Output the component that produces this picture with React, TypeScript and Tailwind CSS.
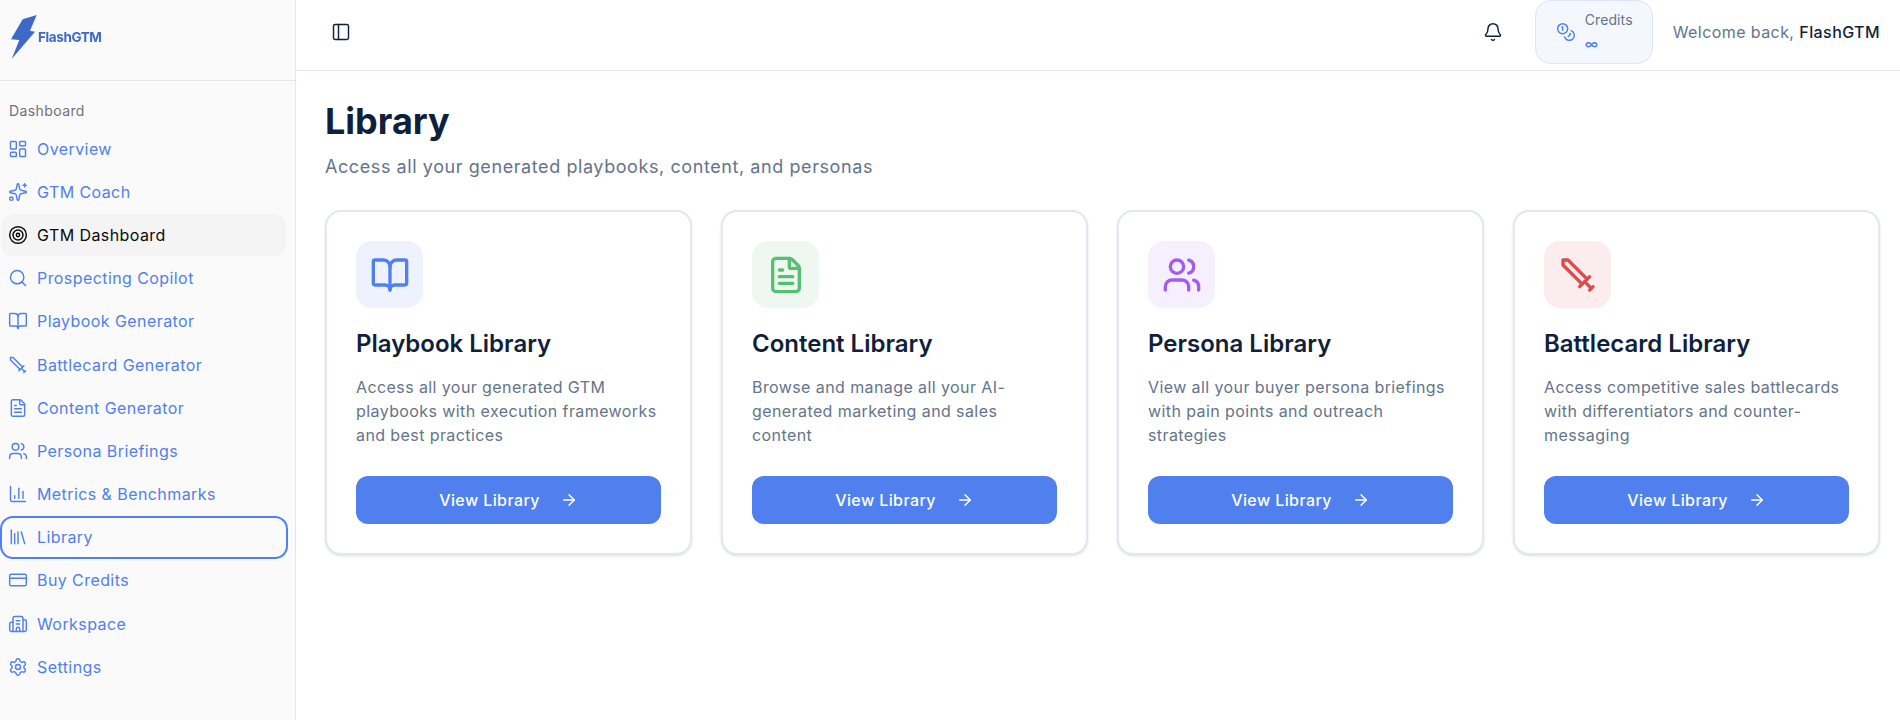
import {
  ArrowRight,
  Bell,
  BookOpen,
  Building2,
  ChartColumn,
  Coins,
  CreditCard,
  FileText,
  LayoutDashboard,
  Library,
  PanelLeft,
  Search,
  Settings,
  Sparkles,
  Sword,
  Target,
  Users,
} from 'lucide-react';

const navItems = [
  { label: 'Overview', icon: LayoutDashboard },
  { label: 'GTM Coach', icon: Sparkles },
  { label: 'GTM Dashboard', icon: Target, active: true },
  { label: 'Prospecting Copilot', icon: Search },
  { label: 'Playbook Generator', icon: BookOpen },
  { label: 'Battlecard Generator', icon: Sword, flip: true },
  { label: 'Content Generator', icon: FileText },
  { label: 'Persona Briefings', icon: Users },
  { label: 'Metrics & Benchmarks', icon: ChartColumn },
  { label: 'Library', icon: Library, focused: true },
  { label: 'Buy Credits', icon: CreditCard },
  { label: 'Workspace', icon: Building2 },
  { label: 'Settings', icon: Settings },
];

const cards = [
  {
    title: 'Playbook Library',
    text: 'Access all your generated GTM playbooks with execution frameworks and best practices',
    icon: BookOpen,
    tile: 'bg-[#eef2fd]',
    color: 'text-[#5080ee]',
  },
  {
    title: 'Content Library',
    text: 'Browse and manage all your AI-generated marketing and sales content',
    icon: FileText,
    tile: 'bg-[#eef8f0]',
    color: 'text-[#55c070]',
  },
  {
    title: 'Persona Library',
    text: 'View all your buyer persona briefings with pain points and outreach strategies',
    icon: Users,
    tile: 'bg-[#f5effe]',
    color: 'text-[#a35cf0]',
  },
  {
    title: 'Battlecard Library',
    text: 'Access competitive sales battlecards with differentiators and counter-messaging',
    icon: Sword,
    tile: 'bg-[#fbeded]',
    color: 'text-[#dc4c4c] -scale-x-100',
  },
];

function Sidebar() {
  return (
    <aside className="w-[296px] shrink-0 h-screen bg-[#fafafa] border-r border-[#e5e5e5]">
      {/* Logo */}
      <div className="h-[81px] border-b border-[#e2e8f0] pl-[10px] pt-[14px]">
        <div className="flex items-start">
          <svg width="28" height="46" viewBox="0 0 28 46" className="shrink-0">
            <path d="M12.7 5.3 L26.7 1 L20 16.7 L25 17.7 L1.7 45 L9.3 26 L1 25.3 Z" fill="#3d6ac8" />
          </svg>
          <span className="text-[13.5px] leading-5 mt-[13px] font-bold text-[#3d6ac8] tracking-[-0.4px] blur-[0.3px]">FlashGTM</span>
        </div>
      </div>

      {/* Nav */}
      <div className="text-[14px] leading-5 tracking-[0.4px] text-[#71717a] pl-[9px] mt-[20px] mb-[7px]">Dashboard</div>
      <nav className="flex flex-col gap-[2px] pl-[1px] pr-[9px]">
        {navItems.map((item) => (
          <div
            key={item.label}
            className={`flex items-center gap-[9px] h-[41.2px] pl-[7px] rounded-xl text-[16px] tracking-[0.42px] ${
              item.active ? 'bg-[#f4f4f5] text-[#0a0a0a]' : 'text-[#5080ee]'
            } ${item.focused ? 'outline-[2.5px] outline-offset-[-1px] outline-[#5080ee] -mr-px' : ''}`}
          >
            <item.icon size={20} strokeWidth={1.75} className={`shrink-0 ${item.flip ? '-scale-x-100' : ''}`} />
            <span>{item.label}</span>
          </div>
        ))}
      </nav>
    </aside>
  );
}

function Header() {
  return (
    <header className="h-[71px] border-b border-[#e2e8f0] flex items-start pl-[35px] pr-5">
      <div className="h-[64px] flex items-center">
        <PanelLeft size={20} strokeWidth={1.75} className="text-[#0f1f3d]" />
      </div>
      <div className="ml-auto flex items-center h-[64px]">
        <Bell size={20} strokeWidth={1.75} className="text-[#0f1f3d] mr-[32px]" />
        <div className="w-[118px] h-[64px] rounded-2xl border border-[#dbe4fb] bg-[#f5f7fe] flex items-center pl-[20px] gap-[9px]">
          <Coins size={20} strokeWidth={1.75} className="text-[#5080ee]" />
          <div className="flex flex-col -mt-px">
            <span className="text-[14px] leading-5 tracking-[0.1px] text-[#64748b]">Credits</span>
            <span className="text-[14px] leading-5 mt-[4px] font-medium text-[#5080ee]">∞</span>
          </div>
        </div>
        <div className="ml-5 text-[16px] tracking-[0.42px] text-[#64748b]">
          Welcome back, <span className="font-medium text-[#0f1f3d]">FlashGTM</span>
        </div>
      </div>
    </header>
  );
}

function LibraryCard({ title, text, icon: Icon, tile, color }: (typeof cards)[number]) {
  return (
    <div className="border-2 border-[#e2e8f0] rounded-2xl p-[29px] shadow-sm bg-white flex flex-col">
      <div className={`w-[67px] h-[67px] rounded-2xl flex items-center justify-center ${tile}`}>
        <Icon size={40} strokeWidth={2} className={color} />
      </div>
      <h3 className="mt-[20px] text-[24px] leading-8 font-semibold text-[#0f1f3d]">{title}</h3>
      <p className="mt-[15px] text-[16px] leading-6 tracking-[0.41px] text-[#64748b]">{text}</p>
      <button className="mt-[29px] w-full h-[48px] rounded-xl bg-[#5080ee] text-white text-[16px] tracking-[0.4px] font-medium flex items-center justify-center gap-5">
        View Library
        <ArrowRight size={18} strokeWidth={2} />
      </button>
    </div>
  );
}

export default function App() {
  return (
    <div className="flex h-screen overflow-hidden bg-white font-['Inter',sans-serif]">
      <Sidebar />
      <div className="flex-1 min-w-0">
        <Header />
        <main className="pt-[30px] pl-[29px] pr-5">
          <h1 className="text-[36px] leading-10 font-bold text-[#0f1f3d]">Library</h1>
          <p className="mt-3 text-[18px] leading-7 tracking-[0.58px] text-[#64748b]">
            Access all your generated playbooks, content, and personas
          </p>
          <div className="mt-[29px] grid grid-cols-4 gap-[29px]">
            {cards.map((card) => (
              <LibraryCard key={card.title} {...card} />
            ))}
          </div>
        </main>
      </div>
    </div>
  );
}
